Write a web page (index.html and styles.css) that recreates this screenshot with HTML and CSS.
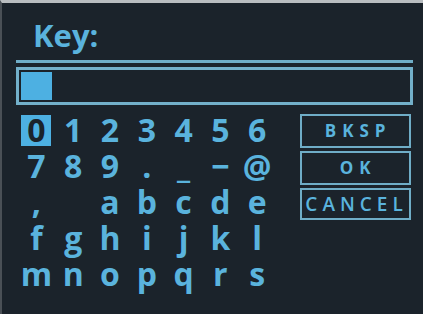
FILE: index.html
```html
<!DOCTYPE html>
<html>
<head>
<meta charset="utf-8">
<link rel="stylesheet" href="styles.css">
</head>
<body>
<div class="screen">
  <div class="title">Key:</div>
  <div class="rule"></div>
  <div class="input"><div class="cursor"></div></div>
  <div class="lower">
    <div class="keys">
      <div class="key"><span class="sel">0</span></div>
      <div class="key">1</div>
      <div class="key">2</div>
      <div class="key">3</div>
      <div class="key">4</div>
      <div class="key">5</div>
      <div class="key">6</div>
      <div class="key">7</div>
      <div class="key">8</div>
      <div class="key">9</div>
      <div class="key">.</div>
      <div class="key">_</div>
      <div class="key">&minus;</div>
      <div class="key">@</div>
      <div class="key">,</div>
      <div class="key">&nbsp;</div>
      <div class="key">a</div>
      <div class="key">b</div>
      <div class="key">c</div>
      <div class="key">d</div>
      <div class="key">e</div>
      <div class="key">f</div>
      <div class="key">g</div>
      <div class="key">h</div>
      <div class="key">i</div>
      <div class="key">j</div>
      <div class="key">k</div>
      <div class="key">l</div>
      <div class="key">m</div>
      <div class="key">n</div>
      <div class="key">o</div>
      <div class="key">p</div>
      <div class="key">q</div>
      <div class="key">r</div>
      <div class="key">s</div>
    </div>
    <div class="buttons">
      <div class="btn">BKSP</div>
      <div class="btn">OK</div>
      <div class="btn btn-wide">CANCEL</div>
    </div>
  </div>
</div>
</body>
</html>
```
FILE: styles.css
```css
html, body {
  margin: 0;
  padding: 0;
  background: #1b232b;
}
body {
  width: 423px;
  height: 314px;
  overflow: hidden;
}
.screen {
  box-sizing: border-box;
  width: 423px;
  height: 314px;
  border-top: 3px solid #b9bdc0;
  border-left: 2px solid #4a5056;
  padding: 14px 10px 0 14px;
  font-family: "Open Sans", "DejaVu Sans", sans-serif;
  color: #5ab3dd;
}
.title {
  font-size: 31px;
  font-weight: 700;
  line-height: 36px;
  padding-left: 17px;
}
.rule {
  height: 3px;
  background: #6fadc7;
  margin-top: 7px;
}
.input {
  margin-top: 4px;
  height: 38px;
  box-sizing: border-box;
  border: 3px solid #73b0ca;
  padding: 2px;
}
.cursor {
  width: 31px;
  height: 100%;
  background: #4db0e2;
}
.lower {
  display: flex;
  margin-top: 7px;
}
.keys {
  display: grid;
  grid-template-columns: repeat(7, 36.8px);
  grid-auto-rows: 36px;
  margin-left: 2px;
  font-size: 32px;
  font-weight: 700;
  line-height: 36px;
}
.key {
  text-align: center;
}
.sel {
  display: inline-block;
  width: 30px;
  height: 31px;
  margin-top: 3px;
  line-height: 30px;
  background: #4db0e2;
  color: #1b232b;
  vertical-align: top;
}
.buttons {
  margin-left: 24px;
  margin-top: 2px;
  display: flex;
  flex-direction: column;
  gap: 3px;
  width: 111px;
}
.btn {
  box-sizing: border-box;
  height: 34px;
  border: 2px solid #6fadc7;
  text-align: center;
  font-size: 17px;
  font-weight: 700;
  line-height: 30px;
  letter-spacing: 6px;
  padding-left: 6px;
}
.btn-wide {
  height: 32px;
  line-height: 28px;
  font-size: 19px;
  font-weight: 600;
  letter-spacing: 5px;
  padding-left: 3px;
  white-space: nowrap;
}
```
